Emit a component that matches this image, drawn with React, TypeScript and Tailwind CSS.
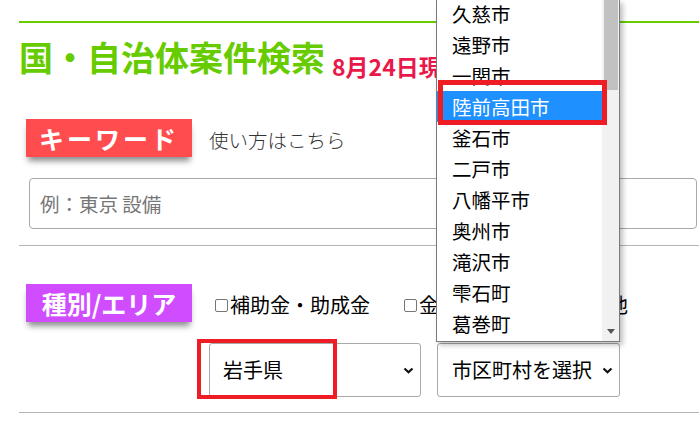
import {ReactNode} from 'react';

const cities = [
  '久慈市',
  '遠野市',
  '一関市',
  '陸前高田市',
  '釜石市',
  '二戸市',
  '八幡平市',
  '奥州市',
  '滝沢市',
  '雫石町',
  '葛巻町',
];

function Badge({color, children}: {color: string; children: ReactNode}) {
  return (
    <div
      className={`${color} w-[166px] h-[38px] flex items-center justify-center text-white font-bold text-[25px] leading-none shadow-[0_6px_6px_-2px_rgba(0,0,0,0.45)]`}
    >
      {children}
    </div>
  );
}

function Check({label}: {label: string}) {
  return (
    <label className="flex items-center text-[20px] leading-none text-black">
      <span className="inline-block size-[13px] border border-[#767676] rounded-[2px] mr-[2px]"></span>
      {label}
    </label>
  );
}

function Chevron() {
  return (
    <svg width="11" height="7" viewBox="0 0 11 7" className="shrink-0">
      <path d="M1.5 1.5 L5.5 5.2 L9.5 1.5" fill="none" stroke="#111" strokeWidth="2.2" />
    </svg>
  );
}

export default function App() {
  return (
    <div className="relative w-[699px] h-[427px] overflow-hidden bg-white font-['Noto_Sans_CJK_JP','Noto_Sans',sans-serif]">
      <div className="pl-[19px] pt-[21px]">
        <div className="h-[2px] bg-[#66cc00]"></div>

        <div className="mt-[17px] flex items-end whitespace-nowrap">
          <h1 className="text-[34px] leading-[34px] font-bold text-[#66cc00]">国・自治体案件検索</h1>
          <span className="ml-[7px] mb-[-4px] text-[23px] leading-[24px] font-bold text-[#e8194a]">8月24日現在</span>
        </div>

        <div className="mt-[45px] ml-[7px] flex items-center">
          <Badge color="bg-[#ff4d4f]">
            <span className="tracking-[3px]">キーワード</span>
          </Badge>
          <span className="ml-[17px] mt-[4px] text-[19.5px] font-light text-[#333]">使い方はこちら</span>
        </div>

        <div className="mt-[21px] ml-[10px] w-[668px] h-[51px] border border-[#a9a9a9] rounded-[4px] flex items-center px-[10px] text-[19.5px] text-[#777]">
          例：東京 設備
        </div>

        <div className="mt-[16px] h-px bg-[#b5b5b5]"></div>

        <div className="mt-[38px] ml-[7px] flex items-center">
          <Badge color="bg-[#cf4dff]">種別/エリア</Badge>
          <div className="ml-[23px] mt-[4px] flex items-center gap-[34px]">
            <Check label="補助金・助成金" />
            <Check label="金融・融資" />
            <Check label="その他" />
          </div>
        </div>

        <div className="mt-[21px] ml-[190px] flex gap-[16px]">
          <div className="relative">
            <div className="w-[212px] h-[54px] border border-[#a9a9a9] rounded-[3px] flex items-center justify-between pl-[13px] pr-[6px] text-[20px] text-black">
              岩手県
              <Chevron />
            </div>
            <div className="absolute left-[-12px] top-[-4px] w-[140px] h-[60px] border-[4px] border-[#ee1c25]"></div>
          </div>
          <div className="w-[183px] h-[54px] border border-[#a9a9a9] rounded-[3px] flex items-center justify-between pl-[14px] pr-[6px] text-[20px] text-black">
            市区町村を選択
            <Chevron />
          </div>
        </div>

        <div className="mt-[15px] h-px bg-[#b5b5b5]"></div>
      </div>

      {/* open city list */}
      <div className="absolute left-[436px] top-0 w-[184px] h-[342px] bg-white border border-[#7a7a7a] border-t-0 shadow-[3px_3px_5px_rgba(0,0,0,0.25)] overflow-hidden flex">
        <div className="flex-1 mt-[-2px]">
          {cities.map((c) => (
            <div
              key={c}
              className={`h-[31px] flex items-center pl-[15px] text-[19.5px] leading-none ${
                c === '陸前高田市' ? 'bg-[#1e90ff] text-white' : 'text-black'
              }`}
            >
              {c}
            </div>
          ))}
        </div>
        <div className="w-[17px] bg-[#f1f1f1] flex flex-col items-center">
          <div className="w-[14px] h-[90px] bg-[#c1c1c1]"></div>
          <div className="flex-1"></div>
          <svg width="8" height="5" viewBox="0 0 8 5" className="mb-[7px]">
            <path d="M0 0 H8 L4 5 Z" fill="#555" />
          </svg>
        </div>
      </div>
      <div className="absolute left-[438px] top-[80px] w-[169px] h-[45px] border-[5px] border-[#ee1c25]"></div>
    </div>
  );
}
